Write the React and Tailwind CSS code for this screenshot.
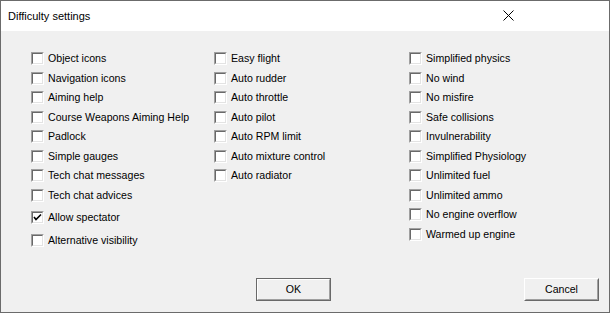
import React from 'react';

const col1 = [
  { label: 'Object icons' },
  { label: 'Navigation icons' },
  { label: 'Aiming help' },
  { label: 'Course Weapons Aiming Help' },
  { label: 'Padlock' },
  { label: 'Simple gauges' },
  { label: 'Tech chat messages' },
  { label: 'Tech chat advices' },
  { label: 'Allow spectator', checked: true, extra: true },
  { label: 'Alternative visibility', extra: true },
];

const col2 = [
  { label: 'Easy flight' },
  { label: 'Auto rudder' },
  { label: 'Auto throttle' },
  { label: 'Auto pilot' },
  { label: 'Auto RPM limit' },
  { label: 'Auto mixture control' },
  { label: 'Auto radiator' },
];

const col3 = [
  { label: 'Simplified physics' },
  { label: 'No wind' },
  { label: 'No misfire' },
  { label: 'Safe collisions' },
  { label: 'Invulnerability' },
  { label: 'Simplified Physiology' },
  { label: 'Unlimited fuel' },
  { label: 'Unlimited ammo' },
  { label: 'No engine overflow' },
  { label: 'Warmed up engine' },
];

const Check = ({ label, checked, extra }) => (
  <div className={`flex items-start h-[19.5px] ${extra ? 'mt-[3px]' : ''}`}>
    {/* classic sunken checkbox */}
    <div className="w-[13px] h-[13px] border border-t-[#a0a0a0] border-l-[#a0a0a0] border-r-white border-b-white shrink-0">
      <div className="w-full h-full border border-t-[#696969] border-l-[#696969] border-r-[#e3e3e3] border-b-[#e3e3e3] bg-white flex items-center justify-center">
        {checked && (
          <svg width="9" height="9" viewBox="0 0 9 9">
            <path d="M1 4 L3 6.5 L8 1.5" fill="none" stroke="#000" strokeWidth="1.6" />
          </svg>
        )}
      </div>
    </div>
    <span className="ml-[4px] text-[10.6px] leading-[13px] text-black whitespace-nowrap">{label}</span>
  </div>
);

const Button = ({ children, isDefault }) => (
  <button
    className={`w-[75px] h-[23px] border ${
      isDefault
        ? 'border-[#696969]'
        : 'border-t-white border-l-white border-r-[#696969] border-b-[#696969]'
    } bg-[#f0f0f0]`}
  >
    <div
      className={`w-full h-full border ${
        isDefault
          ? 'border-t-white border-l-white border-r-[#a0a0a0] border-b-[#a0a0a0]'
          : 'border-t-[#f0f0f0] border-l-[#f0f0f0] border-r-[#a0a0a0] border-b-[#a0a0a0]'
      } flex items-center justify-center text-[10.6px] text-black`}
    >
      {children}
    </div>
  </button>
);

export default function App() {
  return (
    <div
      className="w-[610px] h-[313px] border border-[#6b6b6b] bg-[#f0f0f0] flex flex-col"
      style={{ fontFamily: '"Liberation Sans", Arial, sans-serif' }}
    >
      {/* Title bar */}
      <div className="h-[30px] bg-white flex items-center justify-between pl-[7px] pr-[95px] shrink-0">
        <span className="text-[11px] text-black">Difficulty settings</span>
        <svg width="11" height="11" viewBox="0 0 11 11" className="-mt-[1px]">
          <path d="M0.5 0.5 L10.5 10.5 M10.5 0.5 L0.5 10.5" stroke="#000" strokeWidth="1" />
        </svg>
      </div>

      {/* Options */}
      <div className="flex pl-[30px] pt-[21px]">
        <div className="w-[183px] flex flex-col">
          {col1.map((c) => (
            <Check key={c.label} {...c} />
          ))}
        </div>
        <div className="w-[195px] flex flex-col">
          {col2.map((c) => (
            <Check key={c.label} {...c} />
          ))}
        </div>
        <div className="flex flex-col">
          {col3.map((c) => (
            <Check key={c.label} {...c} />
          ))}
        </div>
      </div>

      {/* Buttons */}
      <div className="mt-auto flex justify-between pl-[255px] pr-[10px] pb-[11px]">
        <Button isDefault>OK</Button>
        <Button>Cancel</Button>
      </div>
    </div>
  );
}
